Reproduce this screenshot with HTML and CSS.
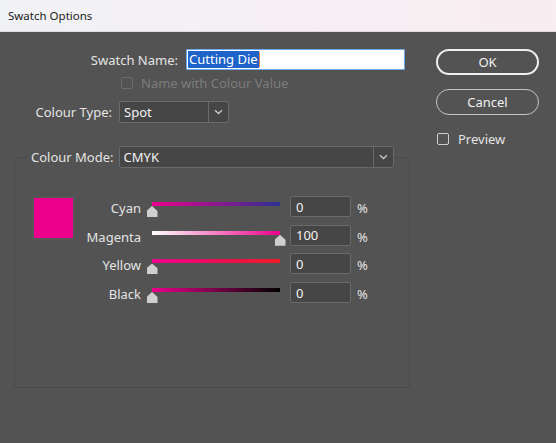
FILE: index.html
```html
<!DOCTYPE html>
<html lang="en">
<head>
<meta charset="utf-8">
<title>Swatch Options</title>
<link rel="stylesheet" href="styles.css">
</head>
<body>
<div class="dialog">
  <header class="titlebar">Swatch Options</header>
  <main class="content">
    <section class="form">
      <div class="row name-row">
        <label class="label name-label" for="swatch-name">Swatch Name:</label>
        <div class="text-input focused" id="swatch-name"><span class="selected">Cutting Die</span><span class="caret"></span></div>
      </div>
      <div class="row check-row disabled">
        <span class="checkbox"></span>
        <span class="check-text">Name with Colour Value</span>
      </div>
      <div class="row type-row">
        <span class="label type-label">Colour Type:</span>
        <div class="dropdown type-dropdown">
          <span class="dropdown-value">Spot</span>
          <span class="dropdown-arrow"><svg width="9" height="6" viewBox="0 0 9 6"><path d="M1 1.2 L4.5 4.5 L8 1.2" fill="none" stroke="#c9c9c9" stroke-width="1.3"/></svg></span>
        </div>
      </div>
      <fieldset class="group">
        <legend class="group-legend">
          <span class="label mode-label">Colour Mode:</span>
          <span class="dropdown mode-dropdown">
            <span class="dropdown-value">CMYK</span>
            <span class="dropdown-arrow"><svg width="9" height="6" viewBox="0 0 9 6"><path d="M1 1.2 L4.5 4.5 L8 1.2" fill="none" stroke="#c9c9c9" stroke-width="1.3"/></svg></span>
          </span>
        </legend>
        <div class="group-body">
          <div class="swatch"></div>
          <div class="sliders">
            <span class="slider-label">Cyan</span>
            <div class="slider"><div class="track track-cyan"></div><span class="thumb" style="left: 0%"></span></div>
            <div class="num-input">0</div>
            <span class="unit">%</span>

            <span class="slider-label">Magenta</span>
            <div class="slider"><div class="track track-magenta"></div><span class="thumb" style="left: 100%"></span></div>
            <div class="num-input">100</div>
            <span class="unit">%</span>

            <span class="slider-label">Yellow</span>
            <div class="slider"><div class="track track-yellow"></div><span class="thumb" style="left: 0%"></span></div>
            <div class="num-input">0</div>
            <span class="unit">%</span>

            <span class="slider-label">Black</span>
            <div class="slider"><div class="track track-black"></div><span class="thumb" style="left: 0%"></span></div>
            <div class="num-input">0</div>
            <span class="unit">%</span>
          </div>
        </div>
      </fieldset>
    </section>
    <aside class="actions">
      <button class="btn btn-primary">OK</button>
      <button class="btn btn-secondary">Cancel</button>
      <div class="preview">
        <span class="checkbox preview-box"></span>
        <span class="preview-text">Preview</span>
      </div>
    </aside>
  </main>
</div>
</body>
</html>
```

FILE: styles.css
```css
* {
  box-sizing: border-box;
}

html, body {
  margin: 0;
  padding: 0;
}

body {
  width: 556px;
  height: 443px;
  overflow: hidden;
  background: #535353;
  font-family: "Noto Sans", "Open Sans", sans-serif;
  font-size: 13px;
  color: #e4e4e4;
}

.dialog {
  display: flex;
  flex-direction: column;
  height: 443px;
}

/* Window title bar */
.titlebar {
  height: 32px;
  flex: none;
  padding-left: 8px;
  display: flex;
  align-items: center;
  background: linear-gradient(90deg, #f1f2f6 0%, #f6eff4 55%, #f8edf1 100%);
  border-bottom: 1px solid #dcdcdc;
  color: #1b1b1b;
  font-size: 11.5px;
}

.content {
  flex: 1;
  display: flex;
  padding: 17px 0 0 14px;
}

.form {
  width: 396px;
  display: flex;
  flex-direction: column;
}

.row {
  display: flex;
  align-items: center;
}

.label {
  text-align: right;
  white-space: nowrap;
}

/* Swatch name */
.name-label {
  width: 164px;
  margin-right: 8px;
}

.text-input {
  width: 219px;
  height: 21px;
  background: #ffffff;
  border: 1px solid #6aa9ec;
  border-radius: 1px;
  display: flex;
  align-items: center;
  padding-left: 1px;
  color: #ffffff;
}

.selected {
  background: #1d63c9;
  padding: 0 1px;
  line-height: 17px;
}

.caret {
  width: 1px;
  height: 15px;
  background: #e8864a;
}

/* Disabled checkbox row */
.check-row {
  margin: 6px 0 0 107px;
  height: 13px;
}

.checkbox {
  width: 12px;
  height: 12px;
  border: 1px solid #d2d2d2;
  border-radius: 2px;
  flex: none;
}

.disabled .checkbox {
  border-color: #6d6d6d;
}

.check-text {
  margin-left: 8px;
  color: #7c7c7c;
}

/* Colour type */
.type-row {
  margin-top: 12px;
}

.type-label {
  width: 98px;
  margin-right: 7px;
}

.dropdown {
  display: flex;
  align-items: center;
  height: 22px;
  background: #464646;
  border: 1px solid #6a6a6a;
  border-radius: 2px;
}

.type-dropdown {
  width: 110px;
}

.dropdown-value {
  flex: 1;
  padding-left: 4px;
  color: #f2f2f2;
}

.dropdown-arrow {
  width: 20px;
  height: 100%;
  border-left: 1px solid #6a6a6a;
  display: flex;
  align-items: center;
  justify-content: center;
}

/* Colour mode group */
.group {
  margin: 23px 0 0 0;
  padding: 0;
  width: 396px;
  height: 242px;
  border: 1px solid #4a4a4a;
  border-radius: 3px;
}

.group-legend {
  display: flex;
  align-items: center;
  margin-left: 12px;
  padding: 0 0 0 4px;
}

.mode-label {
  margin-right: 5px;
}

.mode-dropdown {
  width: 275px;
}

.group-body {
  display: flex;
  align-items: flex-start;
  padding: 28px 0 0 18px;
}

.swatch {
  width: 41px;
  height: 42px;
  background: #ec008c;
  border: 1px solid #5a5a5a;
  margin-top: 1px;
  flex: none;
}

.sliders {
  display: grid;
  grid-template-columns: 67px 149px 61px auto;
  grid-auto-rows: 21px;
  row-gap: 7.7px;
}

.slider-label {
  text-align: right;
  line-height: 18px;
  padding-top: 3px;
}

.slider {
  position: relative;
  height: 21px;
  margin: 0 10px 0 11px;
}

.track {
  position: absolute;
  top: 6px;
  left: 0;
  right: 0;
  height: 4px;
}

.track-cyan {
  background: linear-gradient(90deg, #ec008c, #2e3192);
}

.track-magenta {
  background: linear-gradient(90deg, #ffffff, #ec008c);
}

.track-yellow {
  background: linear-gradient(90deg, #ec008c, #ed1c24);
}

.track-black {
  background: linear-gradient(90deg, #ec008c, #000000);
}

.thumb {
  position: absolute;
  top: 10px;
  width: 11px;
  height: 11px;
  margin-left: -5.5px;
  background: #cfcfcf;
  clip-path: polygon(50% 0, 100% 45%, 100% 100%, 0 100%, 0 45%);
}

.num-input {
  height: 21px;
  background: #464646;
  border: 1px solid #6a6a6a;
  border-radius: 2px;
  padding-left: 5px;
  display: flex;
  align-items: center;
  color: #f2f2f2;
}

.unit {
  padding-left: 6px;
  line-height: 18px;
  padding-top: 3px;
}

/* Buttons */
.actions {
  margin-left: 26px;
  display: flex;
  flex-direction: column;
  align-items: flex-start;
}

.btn {
  width: 103px;
  height: 26px;
  border-radius: 13px;
  background: transparent;
  font-family: inherit;
  font-size: 13px;
  color: #f0f0f0;
  padding: 0;
  cursor: default;
}

.btn-primary {
  border: 2px solid #efefef;
}

.btn-secondary {
  margin-top: 14px;
  border: 1.5px solid #c4c4c4;
}

.preview {
  margin-top: 15px;
  margin-left: 1px;
  display: flex;
  align-items: center;
}

.preview-box {
  border-color: #cfcfcf;
}

.preview-text {
  margin-left: 9px;
}
```
